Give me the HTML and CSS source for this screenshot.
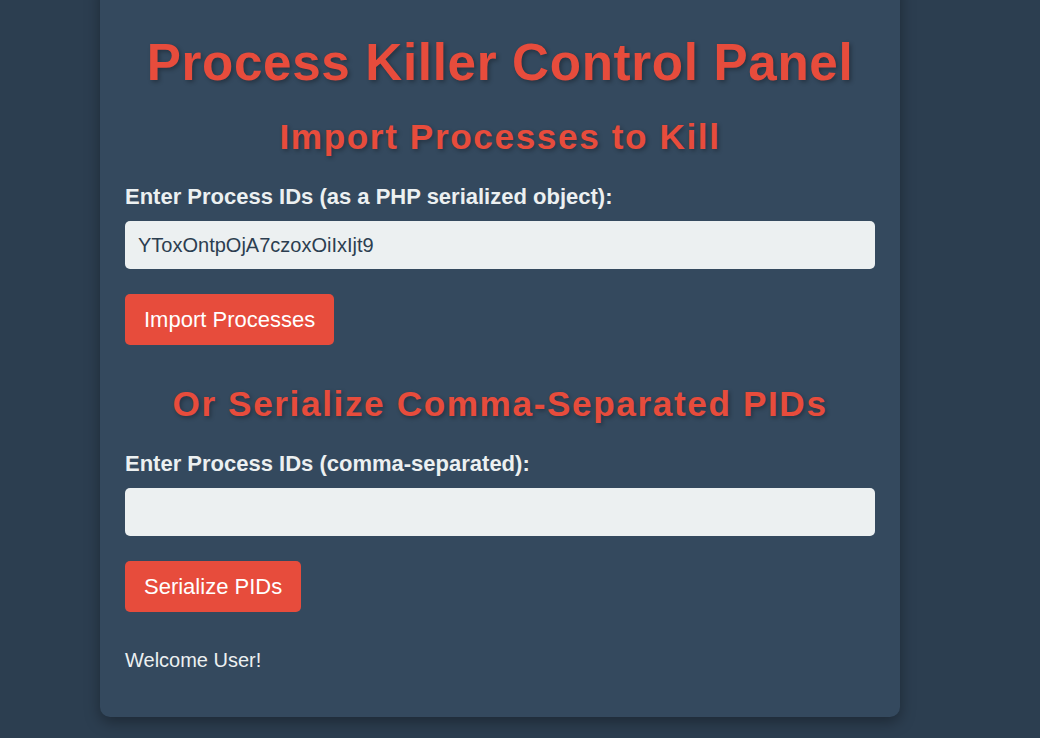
FILE: index.html
```html
<!DOCTYPE html>
<html lang="en">
<head>
<meta charset="utf-8">
<title>Process Killer Control Panel</title>
<link rel="stylesheet" href="styles.css">
</head>
<body>
<div class="panel">
  <h1 class="title">Process Killer Control Panel</h1>
  <h2 class="section-title">Import Processes to Kill</h2>
  <form class="form">
    <label class="field-label" for="data">Enter Process IDs (as a PHP serialized object):</label>
    <input class="field-input" id="data" type="text" value="YToxOntpOjA7czoxOiIxIjt9">
    <button class="btn" type="button">Import Processes</button>
  </form>
  <h2 class="section-title">Or Serialize Comma-Separated PIDs</h2>
  <form class="form">
    <label class="field-label" for="pids">Enter Process IDs (comma-separated):</label>
    <input class="field-input" id="pids" type="text" value="">
    <button class="btn" type="button">Serialize PIDs</button>
  </form>
  <p class="welcome">Welcome User!</p>
</div>
</body>
</html>
```

FILE: styles.css
```css
html, body {
  margin: 0;
  padding: 0;
}
body {
  background: #2c3e50;
  font-family: "Liberation Sans", Arial, sans-serif;
  color: #ecf0f1;
  height: 100vh;
  box-sizing: border-box;
  display: flex;
  justify-content: flex-start;
  align-items: flex-end;
  padding: 0 0 21px 100px;
  overflow: hidden;
}
.panel {
  width: 800px;
  box-sizing: border-box;
  background: #34495e;
  padding: 25px;
  border-radius: 10px;
  box-shadow: 0 5px 15px rgba(0, 0, 0, 0.35);
  flex-shrink: 0;
}
.title {
  color: #e74c3c;
  font-size: 51.2px;
  letter-spacing: 0.65px;
  text-align: center;
  margin: 30px 0 24px;
  line-height: 60px;
  text-shadow: 2px 2px 4px rgba(0, 0, 0, 0.3);
}
.section-title {
  color: #e74c3c;
  font-size: 35.2px;
  letter-spacing: 1.6px;
  text-align: center;
  margin: 0 0 29px;
  line-height: 39px;
  text-shadow: 2px 2px 4px rgba(0, 0, 0, 0.3);
}
.form {
  display: flex;
  flex-direction: column;
  align-items: flex-start;
  margin: 0 0 39px;
}
.field-label {
  font-weight: bold;
  font-size: 22px;
  line-height: 23px;
  margin-bottom: 13px;
}
.field-input {
  width: 100%;
  box-sizing: border-box;
  height: 48px;
  padding: 0 13px;
  border: none;
  border-radius: 5px;
  background: #ecf0f1;
  color: #2c3e50;
  font-family: "Liberation Sans", Arial, sans-serif;
  font-size: 20px;
  margin: 0 0 25px;
  outline: none;
}
.btn {
  height: 51px;
  padding: 0 19px;
  border: none;
  border-radius: 5px;
  background: #e74c3c;
  color: #ffffff;
  font-family: "Liberation Sans", Arial, sans-serif;
  font-size: 22px;
  cursor: pointer;
}
.welcome {
  font-size: 20px;
  line-height: 23px;
  margin: -2px 0 20px;
}
```
